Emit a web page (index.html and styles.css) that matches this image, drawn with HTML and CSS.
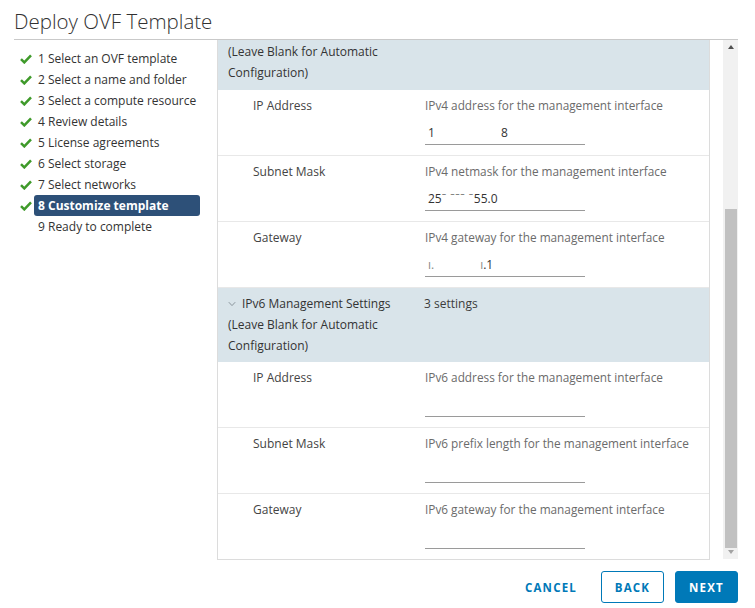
FILE: index.html
```html
<!DOCTYPE html>
<html>
<head>
<meta charset="utf-8">
<title>Deploy OVF Template</title>
<link rel="stylesheet" href="styles.css">
</head>
<body>
<div class="wizard">
  <div class="title-bar">
    <h1 class="title">Deploy OVF Template</h1>
  </div>
  <div class="main">
    <ul class="steps">
      <li class="step done"><span class="icon"><svg width="12" height="10" viewBox="0 0 12 10"><path d="M1 5.2 L4.3 8.4 L11 1.4" fill="none" stroke="#3f9a2a" stroke-width="2.5"/></svg></span><span class="label">1 Select an OVF template</span></li>
      <li class="step done"><span class="icon"><svg width="12" height="10" viewBox="0 0 12 10"><path d="M1 5.2 L4.3 8.4 L11 1.4" fill="none" stroke="#3f9a2a" stroke-width="2.5"/></svg></span><span class="label">2 Select a name and folder</span></li>
      <li class="step done"><span class="icon"><svg width="12" height="10" viewBox="0 0 12 10"><path d="M1 5.2 L4.3 8.4 L11 1.4" fill="none" stroke="#3f9a2a" stroke-width="2.5"/></svg></span><span class="label">3 Select a compute resource</span></li>
      <li class="step done"><span class="icon"><svg width="12" height="10" viewBox="0 0 12 10"><path d="M1 5.2 L4.3 8.4 L11 1.4" fill="none" stroke="#3f9a2a" stroke-width="2.5"/></svg></span><span class="label">4 Review details</span></li>
      <li class="step done"><span class="icon"><svg width="12" height="10" viewBox="0 0 12 10"><path d="M1 5.2 L4.3 8.4 L11 1.4" fill="none" stroke="#3f9a2a" stroke-width="2.5"/></svg></span><span class="label">5 License agreements</span></li>
      <li class="step done"><span class="icon"><svg width="12" height="10" viewBox="0 0 12 10"><path d="M1 5.2 L4.3 8.4 L11 1.4" fill="none" stroke="#3f9a2a" stroke-width="2.5"/></svg></span><span class="label">6 Select storage</span></li>
      <li class="step done"><span class="icon"><svg width="12" height="10" viewBox="0 0 12 10"><path d="M1 5.2 L4.3 8.4 L11 1.4" fill="none" stroke="#3f9a2a" stroke-width="2.5"/></svg></span><span class="label">7 Select networks</span></li>
      <li class="step done active"><span class="icon"><svg width="12" height="10" viewBox="0 0 12 10"><path d="M1 5.2 L4.3 8.4 L11 1.4" fill="none" stroke="#3f9a2a" stroke-width="2.5"/></svg></span><span class="label">8 Customize template</span></li>
      <li class="step"><span class="icon"></span><span class="label">9 Ready to complete</span></li>
    </ul>
    <div class="content">
      <div class="card">
        <div class="group group-cut">
          <div class="group-name">
            <div>(Leave Blank for Automatic</div>
            <div>Configuration)</div>
          </div>
          <div class="group-count"></div>
        </div>
        <div class="row">
          <div class="row-label">IP Address</div>
          <div class="row-value">
            <div class="desc">IPv4 address for the management interface</div>
            <div class="input"><span class="val">1</span><span class="val gap1">8</span></div>
          </div>
        </div>
        <div class="row">
          <div class="row-label">Subnet Mask</div>
          <div class="row-value">
            <div class="desc">IPv4 netmask for the management interface</div>
            <div class="input"><span class="val">25<span class="mask">ˉ ˉˉˉ ˉ</span>55.0</span></div>
          </div>
        </div>
        <div class="row">
          <div class="row-label">Gateway</div>
          <div class="row-value">
            <div class="desc">IPv4 gateway for the management interface</div>
            <div class="input"><span class="val faint">ı.</span><span class="val gap2"><span class="faint">ı</span>.1</span></div>
          </div>
        </div>
        <div class="group">
          <div class="group-name">
            <div class="group-title"><span class="chev"><svg width="8" height="6" viewBox="0 0 8 6"><path d="M0.8 1.2 L4 4.6 L7.2 1.2" fill="none" stroke="#8a949b" stroke-width="1"/></svg></span>IPv6 Management Settings</div>
            <div>(Leave Blank for Automatic</div>
            <div>Configuration)</div>
          </div>
          <div class="group-count">3 settings</div>
        </div>
        <div class="row">
          <div class="row-label">IP Address</div>
          <div class="row-value">
            <div class="desc">IPv6 address for the management interface</div>
            <div class="input"></div>
          </div>
        </div>
        <div class="row">
          <div class="row-label">Subnet Mask</div>
          <div class="row-value">
            <div class="desc">IPv6 prefix length for the management interface</div>
            <div class="input"></div>
          </div>
        </div>
        <div class="row last">
          <div class="row-label">Gateway</div>
          <div class="row-value">
            <div class="desc">IPv6 gateway for the management interface</div>
            <div class="input"></div>
          </div>
        </div>
      </div>
      <div class="scrollbar">
        <div class="arrow up"></div>
        <div class="track"><div class="thumb"></div></div>
        <div class="arrow down"></div>
      </div>
    </div>
  </div>
  <div class="footer">
    <button class="btn btn-link">CANCEL</button>
    <button class="btn btn-outline">BACK</button>
    <button class="btn btn-primary">NEXT</button>
  </div>
</div>
</body>
</html>
```

FILE: styles.css
```css
html, body {
  margin: 0;
  padding: 0;
  background: #ffffff;
}
body {
  font-family: "Open Sans", "Liberation Sans", sans-serif;
  color: #333333;
  width: 755px;
  height: 608px;
  overflow: hidden;
}
.wizard {
  margin-left: 14px;
  width: 724px;
}
.title-bar {
  box-sizing: border-box;
  height: 40px;
  border-bottom: 1px solid #c9c9c9;
}
.title {
  margin: 0;
  padding-top: 8px;
  font-size: 20.5px;
  line-height: 26px;
  font-weight: 300;
  color: #313131;
}
.main {
  display: flex;
  height: 520px;
}
.steps {
  list-style: none;
  margin: 0;
  padding: 8px 0 0 0;
  width: 203px;
}
.step {
  display: flex;
  align-items: center;
  height: 21px;
}
.step .icon {
  width: 20px;
  height: 21px;
  display: flex;
  align-items: center;
  padding-left: 6px;
  box-sizing: border-box;
}
.step .label {
  width: 166px;
  box-sizing: border-box;
  padding: 0 4px;
  font-size: 12px;
  line-height: 21px;
  font-weight: 500;
  color: #333333;
  border-radius: 3px;
  white-space: nowrap;
}
.step.active .label {
  background: #2d5078;
  color: #ffffff;
  font-weight: 700;
}
.content {
  display: flex;
  width: 521px;
}
.card {
  width: 493px;
  box-sizing: border-box;
  border-left: 1px solid #dcdcdc;
  border-right: 1px solid #dcdcdc;
  border-bottom: 1px solid #dcdcdc;
  height: 520px;
  overflow: hidden;
}
.group {
  display: flex;
  background: #d9e4ea;
  padding: 5px 10px 6px 10px;
  font-size: 12px;
  line-height: 21px;
  font-weight: 500;
  color: #333333;
}
.group.group-cut {
  padding-top: 1px;
  padding-bottom: 7px;
}
.group-name {
  width: 196px;
  white-space: nowrap;
}
.group-title {
  display: flex;
  align-items: center;
  height: 21px;
}
.group-count {
  flex: 1;
  color: #3c3c3c;
  font-weight: 400;
}
.chev {
  display: flex;
  align-items: center;
  width: 14px;
  height: 21px;
}
.row {
  display: flex;
  padding: 5px 0 10px 35px;
  border-bottom: 1px solid #e8e8e8;
  font-size: 12px;
  line-height: 21px;
}
.row.last {
  border-bottom: none;
}
.row-label {
  width: 172px;
  color: #444444;
}
.row-value {
  flex: 1;
}
.desc {
  color: #6b6b6b;
  white-space: nowrap;
  font-size: 11.8px;
}
.input {
  margin-top: 5px;
  width: 160px;
  height: 24px;
  box-sizing: border-box;
  border-bottom: 1px solid #9a9a9a;
  padding-left: 3px;
  line-height: 23px;
  color: #333333;
  display: flex;
}
.val {
  white-space: pre;
}
.gap1 {
  margin-left: 66px;
}
.gap2 {
  margin-left: 46px;
}
.mask {
  color: #777777;
  letter-spacing: 0.5px;
}
.faint {
  color: #8a8a8a;
}
.scrollbar {
  margin-left: 13px;
  width: 15px;
  height: 519px;
  background: #f1f1f1;
  display: flex;
  flex-direction: column;
  align-items: center;
}
.arrow {
  width: 0;
  height: 0;
  border-left: 3.5px solid transparent;
  border-right: 3.5px solid transparent;
}
.arrow.up {
  margin-top: 5px;
  border-bottom: 4px solid #505050;
}
.arrow.down {
  margin-bottom: 5px;
  border-top: 4px solid #a3a3a3;
}
.track {
  flex: 1;
  width: 12px;
  display: flex;
  flex-direction: column;
  justify-content: flex-end;
  padding-bottom: 2px;
}
.thumb {
  height: 339px;
  background: #c1c1c1;
}
.footer {
  display: flex;
  justify-content: flex-end;
  gap: 11px;
  padding-top: 11px;
}
.btn {
  font-family: "Open Sans", "Liberation Sans", sans-serif;
  height: 32px;
  min-width: 63px;
  padding: 0 12px;
  box-sizing: border-box;
  font-size: 11.5px;
  font-weight: 700;
  letter-spacing: 1.2px;
  border-radius: 3px;
  background: transparent;
  color: #0079b8;
  border: 1px solid transparent;
}
.btn-outline {
  border-color: #0079b8;
}
.btn-primary {
  background: #0079b8;
  border-color: #0079b8;
  color: #ffffff;
}
```
